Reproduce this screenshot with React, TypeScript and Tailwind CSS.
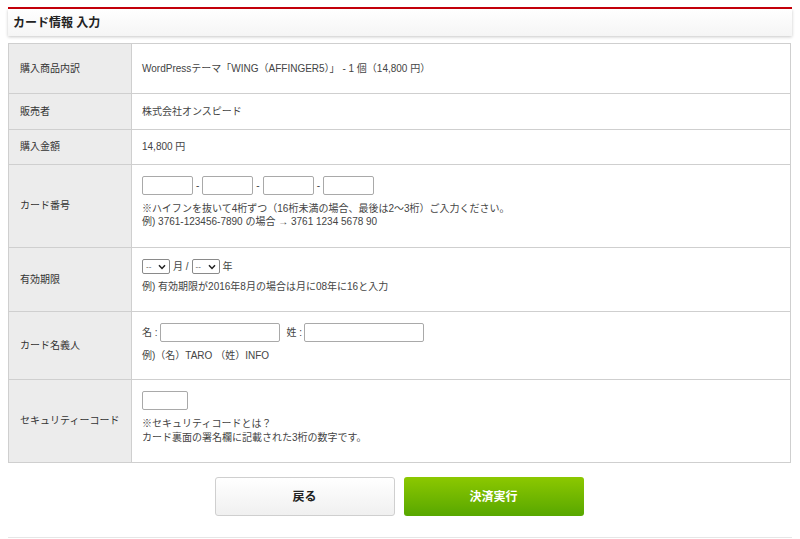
import React from "react";

const font = { fontFamily: "'Liberation Sans', 'Noto Sans CJK JP', sans-serif" };

function Sel() {
  return (
    <span className="relative inline-flex h-[15px] w-[28px] items-center rounded-[2px] border border-[#8a8a8a] bg-white pl-[3px] text-[8px] leading-none text-[#555]">
      <span>--</span>
      <svg className="absolute right-[3px] top-[4px]" width="8" height="6" viewBox="0 0 8 6">
        <path d="M1 1.2 L4 4.4 L7 1.2" fill="none" stroke="#222" strokeWidth="1.5" />
      </svg>
    </span>
  );
}

function Inp({ w }: { w: string }) {
  return <span className={`inline-block h-[19px] ${w} rounded-[2px] border border-[#a9a9a9] bg-white`} />;
}

export default function App() {
  return (
    <div className="min-h-[539px] w-[800px] bg-white px-[8px] pt-[7px] text-[#333]" style={font}>
      <div className="h-[2px] bg-[#c8000b]" />
      <div className="flex h-[27px] items-center bg-gradient-to-b from-white to-[#f5f5f5] pl-[5px] text-[12px] font-bold text-[#222] shadow-[0_1px_3px_rgba(0,0,0,0.22)]">
        カード情報 入力
      </div>
      <table className="mt-[7px] w-[783px] border-collapse text-[10px] leading-[14px]">
        <tbody>
          <tr className="h-[50px]">
            <td className="w-[123px] border border-[#cfcfcf] bg-[#ececec] pl-[11px] align-middle">購入商品内訳</td>
            <td className="border border-[#cfcfcf] pl-[10px] align-middle text-[#444]">
              WordPressテーマ「WING（AFFINGER5）」 - 1 個（14,800 円）
            </td>
          </tr>
          <tr className="h-[36px]">
            <td className="border border-[#cfcfcf] bg-[#ececec] pl-[11px] align-middle">販売者</td>
            <td className="border border-[#cfcfcf] pl-[10px] align-middle text-[#444]">株式会社オンスピード</td>
          </tr>
          <tr className="h-[35px]">
            <td className="border border-[#cfcfcf] bg-[#ececec] pl-[11px] align-middle">購入金額</td>
            <td className="border border-[#cfcfcf] pl-[10px] align-middle text-[#444]">14,800 円</td>
          </tr>
          <tr className="h-[83px]">
            <td className="border border-[#cfcfcf] bg-[#ececec] pl-[11px] align-middle">カード番号</td>
            <td className="border border-[#cfcfcf] pl-[10px] pt-[11px] align-top text-[#444]">
              <div className="flex items-center gap-[3px]">
                <Inp w="w-[51px]" />
                <span>-</span>
                <Inp w="w-[51px]" />
                <span>-</span>
                <Inp w="w-[51px]" />
                <span>-</span>
                <Inp w="w-[51px]" />
              </div>
              <div className="mt-[7px] leading-[13px]">※ハイフンを抜いて4桁ずつ（16桁未満の場合、最後は2～3桁）ご入力ください。</div>
              <div className="leading-[13px]">例) 3761-123456-7890 の場合 → 3761 1234 5678 90</div>
            </td>
          </tr>
          <tr className="h-[64px]">
            <td className="border border-[#cfcfcf] bg-[#ececec] pl-[11px] align-middle">有効期限</td>
            <td className="border border-[#cfcfcf] pl-[10px] pt-[11px] align-top text-[#444]">
              <div className="flex items-center gap-[3px]">
                <Sel />
                <span>月 /</span>
                <Sel />
                <span>年</span>
              </div>
              <div className="mt-[6px]">例) 有効期限が2016年8月の場合は月に08年に16と入力</div>
            </td>
          </tr>
          <tr className="h-[68px]">
            <td className="border border-[#cfcfcf] bg-[#ececec] pl-[11px] align-middle">カード名義人</td>
            <td className="border border-[#cfcfcf] pl-[10px] pt-[11px] align-top text-[#444]">
              <div className="flex items-center">
                <span className="mr-[2px]">名 :</span>
                <Inp w="w-[120px]" />
                <span className="ml-[7px] mr-[2px]">姓 :</span>
                <Inp w="w-[120px]" />
              </div>
              <div className="mt-[7px]">例)（名）TARO （姓）INFO</div>
            </td>
          </tr>
          <tr className="h-[83px]">
            <td className="border border-[#cfcfcf] bg-[#ececec] pl-[11px] align-middle">セキュリティーコード</td>
            <td className="border border-[#cfcfcf] pl-[10px] pt-[11px] align-top text-[#444]">
              <Inp w="w-[46px]" />
              <div className="mt-[3px]">※セキュリティコードとは？</div>
              <div>カード裏面の署名欄に記載された3桁の数字です。</div>
            </td>
          </tr>
        </tbody>
      </table>
      <div className="mt-[14px] flex justify-center gap-[9px] pr-[2px]">
        <button className="h-[39px] w-[180px] rounded-[3px] border border-[#cfcfcf] bg-gradient-to-b from-white to-[#f0f0f0] text-[12px] font-bold text-[#222]" style={font}>
          戻る
        </button>
        <button className="h-[39px] w-[180px] rounded-[3px] bg-gradient-to-b from-[#8cc800] to-[#57a700] text-[12px] font-bold text-white" style={font}>
          決済実行
        </button>
      </div>
      <div className="mt-[21px] h-px bg-[#e6e6e6]" />
    </div>
  );
}
